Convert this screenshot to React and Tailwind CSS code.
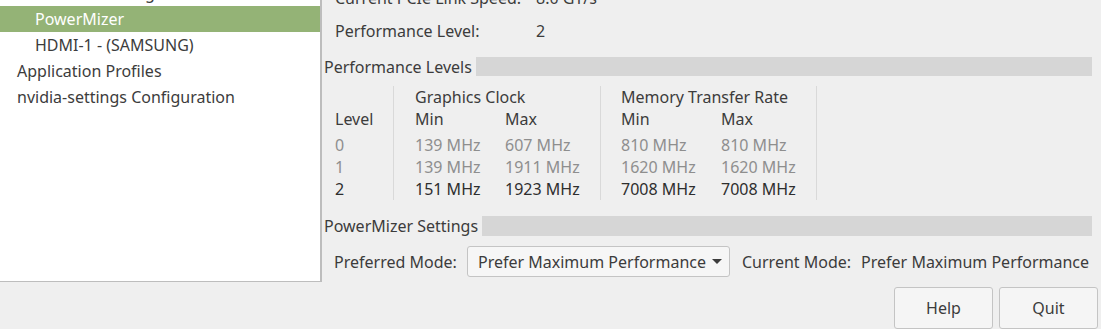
import React from 'react';

const font = { fontFamily: '"Noto Sans", "DejaVu Sans", sans-serif' };

const treeRows = [
  { label: 'Thermal Settings', indent: 'pl-[35px]' },
  { label: 'PowerMizer', indent: 'pl-[35px]', selected: true },
  { label: 'HDMI-1 - (SAMSUNG)', indent: 'pl-[35px]' },
  { label: 'Application Profiles', indent: 'pl-[17px]' },
  { label: 'nvidia-settings Configuration', indent: 'pl-[17px]' },
];

const levels = [
  { level: '0', gmin: '139 MHz', gmax: '607 MHz', mmin: '810 MHz', mmax: '810 MHz', active: false },
  { level: '1', gmin: '139 MHz', gmax: '1911 MHz', mmin: '1620 MHz', mmax: '1620 MHz', active: false },
  { level: '2', gmin: '151 MHz', gmax: '1923 MHz', mmin: '7008 MHz', mmax: '7008 MHz', active: true },
];

function SectionHeader({ title, className = '' }) {
  return (
    <div className={`flex items-center pl-[2px] pr-[9px] ${className}`}>
      <span className="whitespace-nowrap leading-none">{title}</span>
      <div className="flex-1 h-full ml-[4px] bg-[#d6d6d6]" />
    </div>
  );
}

function Column({ header, values, width, rowColor }) {
  return (
    <div className={`flex flex-col ${width}`}>
      <div className="h-[22px] flex items-center">{header}</div>
      <div className="h-[3px]" />
      {values.map((v, i) => (
        <div key={i} className={`flex items-center whitespace-nowrap ${i === 0 ? 'h-[23px]' : 'h-[22px]'} ${rowColor(i)}`}>
          {v}
        </div>
      ))}
    </div>
  );
}

export default function App() {
  const rowColor = i => (levels[i].active ? 'text-[#2e2e2e]' : 'text-[#8e8e8e]');

  return (
    <div className="w-[1101px] h-[329px] overflow-hidden bg-[#efefef] text-[#3c3c3c] text-[16px] flex flex-col" style={font}>
      <div className="flex h-[283px]">
        {/* tree */}
        <div className="w-[322px] shrink-0 bg-white border-r-2 border-b border-[#bdbdbd] overflow-hidden">
          <div className="-mt-[20px]">
            {treeRows.map(r => (
              <div
                key={r.label}
                className={`h-[26px] flex items-center whitespace-nowrap ${r.indent} ${r.selected ? 'bg-[#94b376] text-white' : ''}`}
              >
                {r.label}
              </div>
            ))}
          </div>
        </div>

        {/* page */}
        <div className="flex-1 flex flex-col overflow-hidden">
          <div className="-mt-[17px] flex flex-col">
            <div className="h-[30px] flex items-center pl-[13px] whitespace-nowrap">
              <span className="w-[201px]">Current PCIe Link Speed:</span>
              <span>8.0 GT/s</span>
            </div>
            <div className="h-[36px] flex items-center pl-[13px]">
              <span className="w-[201px]">Performance Level:</span>
              <span>2</span>
            </div>
          </div>

          <SectionHeader title="Performance Levels" className="mt-[8px] h-[19px]" />

          <div className="mt-[10px] h-[114px] flex pl-[13px]">
            <div className="flex flex-col w-[58px]">
              <div className="h-[22px]" />
              <div className="h-[22px] flex items-center">Level</div>
              <div className="h-[3px]" />
              {levels.map((l, i) => (
                <div key={l.level} className={`flex items-center ${i === 0 ? 'h-[23px]' : 'h-[22px]'} ${rowColor(i)}`}>
                  {l.level}
                </div>
              ))}
            </div>

            <div className="border-l border-[#d9d9d9] pl-[21px] flex flex-col">
              <div className="h-[22px] flex items-center whitespace-nowrap">Graphics Clock</div>
              <div className="flex">
                <Column width="w-[90px]" header="Min" values={levels.map(l => l.gmin)} rowColor={rowColor} />
                <Column width="w-[95px]" header="Max" values={levels.map(l => l.gmax)} rowColor={rowColor} />
              </div>
            </div>

            <div className="border-l border-[#d9d9d9] pl-[20px] flex flex-col">
              <div className="h-[22px] flex items-center whitespace-nowrap">Memory Transfer Rate</div>
              <div className="flex">
                <Column width="w-[100px]" header="Min" values={levels.map(l => l.mmin)} rowColor={rowColor} />
                <Column width="w-[95px]" header="Max" values={levels.map(l => l.mmax)} rowColor={rowColor} />
              </div>
            </div>

            <div className="border-l border-[#d9d9d9]" />
          </div>

          <SectionHeader title="PowerMizer Settings" className="mt-[16px] h-[20px]" />

          <div className="mt-[10px] h-[31px] flex items-center pl-[12px] whitespace-nowrap">
            <span className="w-[133px]">Preferred Mode:</span>
            <div className="w-[263px] h-full flex items-center pl-[10px] pr-[7px] bg-[#f6f6f6] border border-[#c4c4c4] rounded-[3px]">
              <span className="flex-1">Prefer Maximum Performance</span>
              <svg width="10" height="6" viewBox="0 0 10 6" className="mt-[1px]">
                <path d="M0 0 L10 0 L5 5 Z" fill="#3c3c3c" />
              </svg>
            </div>
            <span className="ml-[12px]">Current Mode:</span>
            <span className="ml-[10px]">Prefer Maximum Performance</span>
          </div>
        </div>
      </div>

      <div className="flex justify-end gap-[6px] pr-[3px] mt-[5px]">
        <button className="w-[99px] h-[42px] bg-[#f5f5f5] border border-[#c4c4c4] rounded-[3px] text-[#3c3c3c]">Help</button>
        <button className="w-[99px] h-[42px] bg-[#f5f5f5] border border-[#c4c4c4] rounded-[3px] text-[#3c3c3c]">Quit</button>
      </div>
    </div>
  );
}
